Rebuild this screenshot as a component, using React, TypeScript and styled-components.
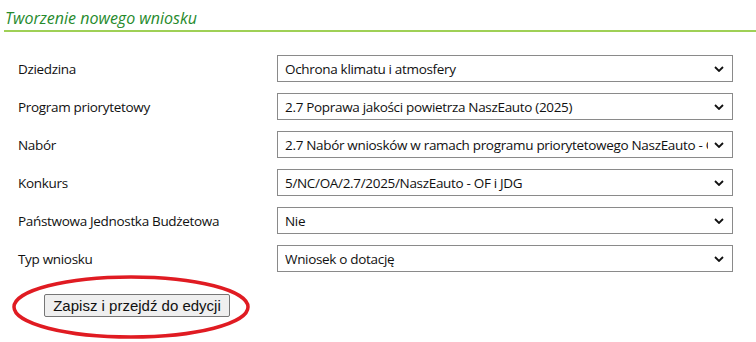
import styled, { createGlobalStyle } from "styled-components";

const GlobalStyle = createGlobalStyle`
  body {
    margin: 0;
    background: #fff;
    font-family: "Open Sans", "Noto Sans", sans-serif;
  }
`;

const fields = [
  { label: "Dziedzina", value: "Ochrona klimatu i atmosfery" },
  { label: "Program priorytetowy", value: "2.7 Poprawa jakości powietrza NaszEauto (2025)" },
  {
    label: "Nabór",
    value: "2.7 Nabór wniosków w ramach programu priorytetowego NaszEauto - OF i JDG",
  },
  { label: "Konkurs", value: "5/NC/OA/2.7/2025/NaszEauto - OF i JDG" },
  { label: "Państwowa Jednostka Budżetowa", value: "Nie" },
  { label: "Typ wniosku", value: "Wniosek o dotację" },
];

export default function App() {
  return (
    <Page>
      <GlobalStyle />
      <Header>
        <Title>Tworzenie nowego wniosku</Title>
      </Header>
      <Form>
        {fields.map(f => (
          <Row key={f.label}>
            <Label>{f.label}</Label>
            <SelectBox>
              <SelectText>{f.value}</SelectText>
              <Chevron viewBox="0 0 10 6">
                <path d="M1 1 L5 5 L9 1" fill="none" stroke="#111" strokeWidth="1.8" />
              </Chevron>
            </SelectBox>
          </Row>
        ))}
      </Form>
      <Actions>
        <SaveButton type="button">Zapisz i przejdź do edycji</SaveButton>
        <Circle viewBox="0 0 240 66">
          <ellipse cx="120" cy="33" rx="117" ry="30" fill="none" stroke="#e01b22" strokeWidth="3.5" />
        </Circle>
      </Actions>
    </Page>
  );
}

const Page = styled.div`
  width: 756px;
  height: 342px;
  overflow: hidden;
`;

const Header = styled.div`
  margin-left: 4px;
  padding: 8px 0 2px 1px;
  border-bottom: 2px solid #9fd056;
`;

const Title = styled.h1`
  margin: 0;
  font-size: 16px;
  line-height: 20px;
  font-weight: normal;
  font-style: italic;
  color: #268a2c;
`;

const Form = styled.div`
  margin-top: 23px;
  padding-left: 18px;
  display: flex;
  flex-direction: column;
  gap: 11px;
`;

const Row = styled.div`
  display: grid;
  grid-template-columns: 259px 456px;
  align-items: center;
  height: 27px;
`;

const Label = styled.div`
  font-size: 13.5px;
  color: #111;
  letter-spacing: -0.32px;
`;

const SelectBox = styled.div`
  box-sizing: border-box;
  height: 27px;
  border: 1px solid #8a8a8a;
  display: flex;
  align-items: center;
  padding: 0 8px 0 7px;
  gap: 6px;
  background: #fff;
`;

const SelectText = styled.span`
  flex: 1;
  font-size: 13.5px;
  color: #111;
  white-space: nowrap;
  overflow: hidden;
  letter-spacing: -0.32px;
`;

const Chevron = styled.svg`
  width: 10px;
  height: 6px;
  flex-shrink: 0;
`;

const Actions = styled.div`
  position: relative;
  margin-top: 22px;
  padding-left: 44px;
`;

const SaveButton = styled.button`
  box-sizing: border-box;
  width: 186px;
  height: 23px;
  padding: 0;
  font-family: "Liberation Sans", Arial, sans-serif;
  font-size: 15px;
  color: #111;
  background: #efefef;
  border: 1px solid #767676;
  border-radius: 2px;
`;

const Circle = styled.svg`
  position: absolute;
  left: 11px;
  top: -20px;
  width: 240px;
  height: 66px;
  pointer-events: none;
`;
